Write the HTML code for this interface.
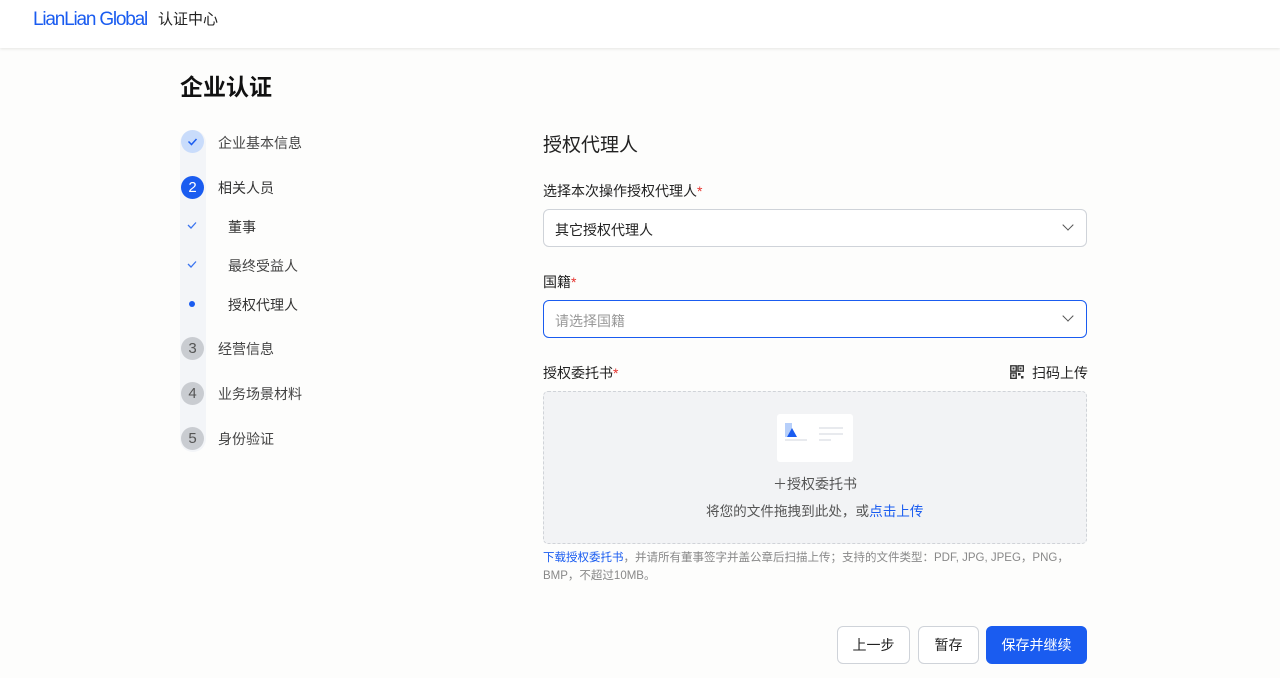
<!DOCTYPE html>
<html><head><meta charset="utf-8"><style>
*{box-sizing:border-box;margin:0;padding:0}
body{width:1280px;height:678px;overflow:hidden;background:#fdfdfc;font-family:"Liberation Sans","Noto Sans CJK SC",sans-serif;color:#222;position:relative}
.hdr{position:absolute;left:0;top:0;width:1280px;height:48px;background:#fff;box-shadow:0 1px 3px rgba(0,0,0,.1)}
.logo{position:absolute;left:33px;top:9px;font-size:19px;color:#1a5cf0;letter-spacing:-1.2px}
.logo2{position:absolute;left:158px;top:8px;font-size:15px;color:#222}
.a{position:absolute}
.rail{position:absolute;left:180px;top:130px;width:26px;height:322px;background:#f3f5f8;border-radius:13px}
.c{position:absolute;left:181px;width:23px;height:23px;border-radius:50%;text-align:center;line-height:23px;font-size:15px}
.st{position:absolute;font-size:14px;color:#333}
.lbl{position:absolute;left:543px;font-size:14px;color:#222}
.lbl b{color:#e5322d;font-weight:normal}
.sel{position:absolute;left:543px;width:544px;height:38px;border:1px solid #cfd3d9;border-radius:6px;background:#fff;font-size:14px;padding:10px 11px}
.chev{position:absolute;right:14px;width:8px;height:8px;border-right:1.5px solid #555;border-bottom:1.5px solid #555;transform:rotate(45deg);top:11px}
.btn{position:absolute;top:626px;height:38px;border:1px solid #cfd3d9;border-radius:6px;background:#fff;font-size:14px;text-align:center;line-height:36px}
</style></head><body>
<div class="hdr"><div class="logo">LianLian Global</div><div class="logo2">认证中心</div></div>
<div class="a" style="left:180px;top:68px;font-size:23px;font-weight:bold;color:#111">企业认证</div>
<div class="rail"></div>
<div class="c" style="top:130px;background:#c9dcfb"><svg width="23" height="23"><path d="M7.5 11.5l3 3 5-5.5" fill="none" stroke="#1a5cf0" stroke-width="1.5"/></svg></div>
<div class="st" style="left:218px;top:133px;color:#444">企业基本信息</div>
<div class="c" style="top:176px;background:#1a5cf0;color:#fff">2</div>
<div class="st" style="left:218px;top:178px">相关人员</div>
<svg class="a" style="left:186px;top:219px" width="12" height="12"><path d="M2 6l3 3 5-5.5" fill="none" stroke="#3a74f0" stroke-width="1.3"/></svg>
<div class="st" style="left:228px;top:217px">董事</div>
<svg class="a" style="left:186px;top:258px" width="12" height="12"><path d="M2 6l3 3 5-5.5" fill="none" stroke="#3a74f0" stroke-width="1.3"/></svg>
<div class="st" style="left:228px;top:256px;color:#444">最终受益人</div>
<div class="a" style="left:189px;top:301px;width:6px;height:6px;border-radius:50%;background:#1a5cf0"></div>
<div class="st" style="left:228px;top:295px">授权代理人</div>
<div class="c" style="top:337px;background:#c9ccd1;color:#555">3</div>
<div class="st" style="left:218px;top:339px;color:#444">经营信息</div>
<div class="c" style="top:382px;background:#c9ccd1;color:#555">4</div>
<div class="st" style="left:218px;top:384px;color:#444">业务场景材料</div>
<div class="c" style="top:427px;background:#c9ccd1;color:#555">5</div>
<div class="st" style="left:218px;top:429px;color:#444">身份验证</div>

<div class="a" style="left:543px;top:130px;font-size:19px;color:#222">授权代理人</div>
<div class="lbl" style="top:181px">选择本次操作授权代理人<b>*</b></div>
<div class="sel" style="top:209px">其它授权代理人<div class="chev"></div></div>
<div class="lbl" style="top:272px">国籍<b>*</b></div>
<div class="sel" style="top:300px;border-color:#1a5cf0;color:#999">请选择国籍<div class="chev"></div></div>
<div class="lbl" style="top:363px">授权委托书<b>*</b></div>
<svg class="a" style="left:1010px;top:365px" width="14" height="14"><path d="M0 0h6v6H0zM8 0h6v6H8zM0 8h6v6H0z" fill="none" stroke="#333" stroke-width="1.6" transform="translate(.8 .8) scale(.9)"/><rect x="2.5" y="2.5" width="2" height="2" fill="#333"/><rect x="9.5" y="2.5" width="2" height="2" fill="#333"/><rect x="2.5" y="9.5" width="2" height="2" fill="#333"/><rect x="8" y="8" width="2.5" height="2.5" fill="#333"/><rect x="11" y="11" width="2.5" height="2.5" fill="#333"/></svg>
<div class="a" style="left:1032px;top:363px;font-size:14px">扫码上传</div>
<div class="a" style="left:543px;top:391px;width:544px;height:153px;border:1px dashed #d0d3d8;border-radius:5px;background:#f2f3f5"></div>
<div class="a" style="left:777px;top:414px;width:76px;height:48px;background:#fff;border-radius:3px">
<div class="a" style="left:8px;top:9px;width:7px;height:14px;background:#b7cffa"></div>
<div class="a" style="left:10px;top:14px;width:0;height:0;border-left:5px solid transparent;border-right:5px solid transparent;border-bottom:9px solid #1a5cf0"></div>
<div class="a" style="left:8px;top:25px;width:22px;height:2px;background:#e8eaee"></div>
<div class="a" style="left:42px;top:13px;width:24px;height:2px;background:#e8eaee"></div>
<div class="a" style="left:42px;top:19px;width:24px;height:2px;background:#e8eaee"></div>
<div class="a" style="left:42px;top:25px;width:12px;height:2px;background:#e8eaee"></div>
</div>
<div class="a" style="left:773px;top:474px;font-size:14px;color:#555">＋授权委托书</div>
<div class="a" style="left:706px;top:500px;font-size:13.6px;color:#555">将您的文件拖拽到此处，或<span style="color:#1a5cf0">点击上传</span></div>
<div class="a" style="left:543px;top:549px;width:535px;font-size:11.5px;line-height:18px;color:#888"><span style="color:#1a5cf0">下载授权委托书</span>，并请所有董事签字并盖公章后扫描上传；支持的文件类型：PDF, JPG, JPEG，PNG，BMP，不超过10MB。</div>
<div class="btn" style="left:837px;width:73px">上一步</div>
<div class="btn" style="left:918px;width:61px">暂存</div>
<div class="btn" style="left:986px;width:101px;background:#1a5cf0;border-color:#1a5cf0;color:#fff">保存并继续</div>
</body></html>
